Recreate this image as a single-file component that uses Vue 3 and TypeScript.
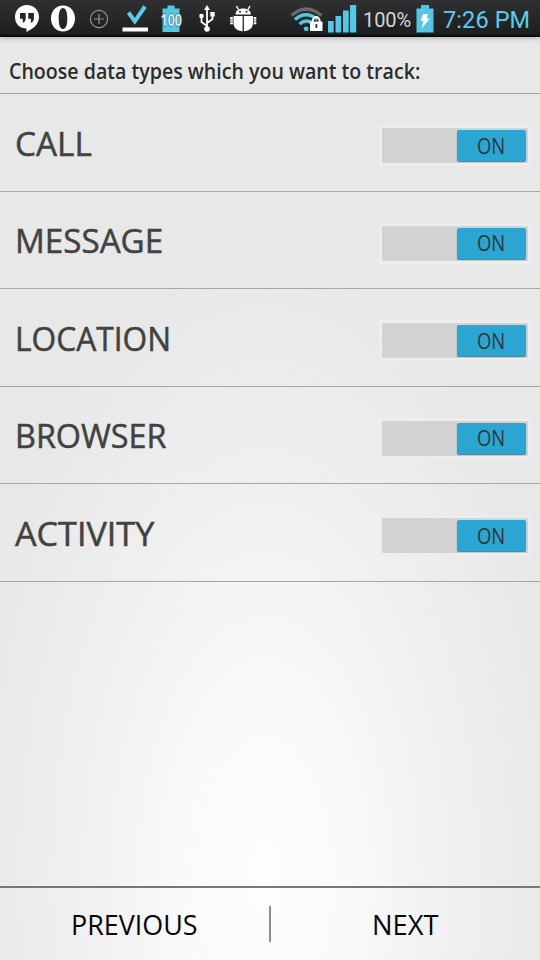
<script setup lang="ts">
import { ref } from 'vue'

interface DataType {
  label: string
  scale: number
  enabled: boolean
}

const dataTypes = ref<DataType[]>([
  { label: 'CALL', scale: 1.01, enabled: true },
  { label: 'MESSAGE', scale: 1.005, enabled: true },
  { label: 'LOCATION', scale: 0.961, enabled: true },
  { label: 'BROWSER', scale: 0.98, enabled: true },
  { label: 'ACTIVITY', scale: 1.035, enabled: true },
])
</script>

<template>
  <div class="screen">
    <header class="status">
      <svg class="tray" width="262" height="37" viewBox="0 0 262 37">
        <path fill="#fff" d="M27 5C20 5 15 10 15 17c0 7 5 11.500 11.500 11.500V32C34 28.500 39 23.500 39 17 39 10 34 5 27 5z" />
        <path fill="#242527" d="M20 13h5.700v5.700c0 2-1.200 3.300-3 4.100v-4.100H20zM28.200 13h5.700v5.700c0 2-1.200 3.300-3 4.100v-4.100h-2.700z" />
        <path fill="#fff" fill-rule="evenodd" d="M63 5.500c7.200 0 12 5.800 12 13s-4.800 13-12 13-12-5.800-12-13 4.800-13 12-13zm0 2.500c-3 0-4.300 4.500-4.300 10.500S60 29 63 29s4.300-4.500 4.300-10.500S66 8 63 8z" />
        <g fill="none" stroke="#929395" stroke-width="1.200">
          <circle cx="99" cy="19" r="8.600" />
          <path d="M94 19h10M99 14v10" />
        </g>
        <path fill="none" stroke="#5bcdea" stroke-width="4" d="M128.500 12.500l6.300 8.800L145 6.500" />
        <path fill="#fff" d="M122.500 27.500H148v4h-25.500z" />
        <path fill="#55c7e4" d="M167.500 5.500h7v3h5V32h-17V8.500h5z" />
        <text class="badge" x="171.300" y="26" text-anchor="middle" textLength="21" lengthAdjust="spacingAndGlyphs">100</text>
        <g stroke="#fff" fill="none" stroke-width="1.800">
          <path d="M207 29V8M207 26l-5.500-4v-5M207 23l5.500-4v-4" />
        </g>
        <g fill="#fff">
          <path d="M207 5l3 5h-6zM210.300 12h4.400v4.400h-4.400z" />
          <circle cx="201.500" cy="16" r="2.300" />
          <circle cx="207" cy="29" r="2.800" />
          <path d="M235.500 14.500c0-3.500 3-6 7.700-6s7.700 2.500 7.700 6z" />
          <path d="M233.500 16h9.100v15.300c-5.600-.3-9.100-3.500-9.100-8.300zM243.900 16h9.100v7c0 4.800-3.500 8-9.100 8.300z" />
        </g>
        <g fill="none" stroke="#fff">
          <path stroke-width="1.500" d="M238.500 9.500L236.500 6M248 9.500l2-3.500" />
          <path stroke-width="2" d="M232.800 18h-2.600M232.800 20.600h-2.600M232.800 23.200h-2.600M253.700 18h2.600M253.700 20.600h2.600M253.700 23.200h2.600" />
        </g>
        <circle cx="240" cy="11.800" r="1" fill="#242527" />
        <circle cx="246.500" cy="11.800" r="1" fill="#242527" />
      </svg>
      <div class="system">
        <svg width="68" height="37" viewBox="0 0 68 37">
          <g fill="none" stroke-width="3.200">
            <path stroke="#686a6c" d="M1.500 15.500Q16 2.500 31.500 15.500" />
            <path stroke="#55c7e4" d="M5 19.500q11-9.500 22.500 0M9.500 24q7-6 14 0" />
          </g>
          <circle cx="16.200" cy="28.800" r="2.400" fill="#55c7e4" />
          <path fill="#fff" d="M20 21.500h12.500V31H20z" />
          <path fill="none" stroke="#fff" stroke-width="2" d="M22.800 22v-1.500a3.400 3.400 0 0 1 6.800 0V22" />
          <path fill="#333" d="M25.500 24h1.800v4h-1.800z" />
          <path fill="#55c7e4" d="M38 21h5.700v11.500H38zM45.500 16h5.700v16.500h-5.700zM53 10.500h5.700v22H53zM60 5h6.200v27.500H60z" />
        </svg>
        <span class="percent">100%</span>
        <svg width="20" height="37" viewBox="0 0 20 37">
          <path fill="#55c7e4" d="M6 5h8v3.500h4.500v24h-17v-24H6z" />
          <path fill="#fff" d="M8 14h5l-1.500 4.500H15l-8.500 10 2-7.500H5.500z" />
        </svg>
        <span class="clock">7:26 PM</span>
      </div>
    </header>

    <h1 class="prompt"><span>Choose data types which you want to track:</span></h1>

    <main class="list">
      <section v-for="item in dataTypes" :key="item.label" class="row">
        <span class="label" :style="{ transform: `scaleX(${item.scale})` }">{{ item.label }}</span>
        <button class="switch" :class="{ off: !item.enabled }" @click="item.enabled = !item.enabled">
          <span class="thumb"><span class="state">{{ item.enabled ? 'ON' : 'OFF' }}</span></span>
        </button>
      </section>
    </main>

    <footer class="footer">
      <button class="nav"><span class="previous">PREVIOUS</span></button>
      <i class="divider"></i>
      <button class="nav"><span class="next">NEXT</span></button>
    </footer>
  </div>
</template>

<style>
body {
  overflow: hidden;
}
</style>

<style scoped>
.screen {
  box-sizing: border-box;
  display: flex;
  flex-direction: column;
  width: 540px;
  height: 960px;
  background: radial-gradient(ellipse 300px 620px at 265px 880px, #fdfdfd 0%, #fafafa 27%, #f0f0f0 62%, #e8e8e8 100%);
  font-family: 'Open Sans', 'Noto Sans', sans-serif;
}
button {
  padding: 0;
  border: 0;
  background: none;
  font: inherit;
}
.status {
  display: flex;
  justify-content: space-between;
  flex: none;
  height: 37px;
  background: linear-gradient(#2f3032, #1d1e20 34px, #08090a 36px);
  box-shadow: 0 1px 5px #aaa;
}
.badge {
  font: 600 17px 'Open Sans', sans-serif;
  fill: #f2f2f2;
  stroke: #427783;
  stroke-width: 1.5px;
  paint-order: stroke;
}
.system {
  display: flex;
  width: 250px;
}
.percent {
  box-sizing: border-box;
  width: 57px;
  padding-left: 5px;
  color: #d6d6d6;
  font-family: Roboto, sans-serif;
  font-size: 20px;
  line-height: 40px;
  letter-spacing: -0.1px;
}
.system svg {
  flex: none;
}
.clock {
  padding-left: 8px;
  color: #5bcdea;
  font-family: Roboto, sans-serif;
  font-size: 23.5px;
  line-height: 40px;
  letter-spacing: 0.1px;
  white-space: nowrap;
}
.prompt {
  box-sizing: border-box;
  flex: none;
  height: 57px;
  margin: 0;
  padding: 4px 0 0 9px;
  border-bottom: 1px solid #a2a2a2;
  color: #2c2c2c;
  font-size: 21px;
  font-weight: 600;
  line-height: 60px;
  white-space: nowrap;
}
.prompt span {
  display: inline-block;
  transform: scaleX(0.933);
  transform-origin: left;
}
.list {
  flex: 1;
}
.row {
  display: flex;
  align-items: center;
  justify-content: space-between;
  box-sizing: border-box;
  height: 97.5px;
  padding: 0 10px 0 15px;
  border-bottom: 1px solid #a5a7a5;
}
.label {
  padding-top: 3px;
  color: #424242;
  font-size: 33px;
  line-height: 44px;
  -webkit-text-stroke: 0.5px #424242;
  transform-origin: left;
}
.switch {
  display: flex;
  justify-content: flex-end;
  box-sizing: border-box;
  width: 152px;
  height: 41px;
  margin: 7px -1px 0 0;
  padding: 2px 2px 3px;
  border: 3px solid #ededed;
  background: #d3d3d3;
}
.switch.off {
  justify-content: flex-start;
}
.thumb {
  display: flex;
  align-items: center;
  justify-content: center;
  width: 69px;
  height: 31px;
  border-radius: 2px;
  background: #2ba5d1;
  box-shadow: 0 1px 1px #4c7f91;
  color: #303537;
  font-size: 21px;
}
.state {
  transform: scaleX(0.88);
}
.off .thumb {
  background: #aaa;
}
.footer {
  display: flex;
  align-items: center;
  box-sizing: border-box;
  flex: none;
  height: 74px;
  border-top: 2px solid #777;
}
.nav {
  flex: 1;
  padding-top: 2px;
  color: #050505;
  font-size: 26.5px;
  line-height: 36px;
}
.nav span {
  display: inline-block;
}
.previous {
  transform: scaleX(1.015);
}
.next {
  transform: scaleX(1.03);
}
.divider {
  width: 2px;
  height: 36px;
  background: #8f8f8f;
}
</style>
